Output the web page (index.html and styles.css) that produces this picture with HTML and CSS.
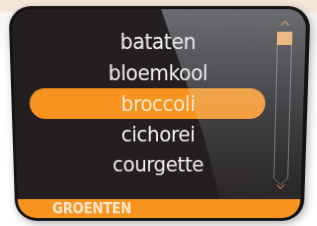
FILE: index.html
```
<!DOCTYPE html>
<html>
<head>
<meta charset="utf-8">
<link rel="stylesheet" href="styles.css">
</head>
<body>
  <div class="screen">
    <div class="screen__body">
      <ul class="screen__list">
        <li class="screen__item">bataten</li>
        <li class="screen__item">bloemkool</li>
        <li class="screen__item screen__item--active">broccoli</li>
        <li class="screen__item">cichorei</li>
        <li class="screen__item">courgette</li>
      </ul>
      <div class="screen__scroll">
        <svg width="15" height="172" viewBox="0 0 15 172">
          <polyline points="4,6 7.5,1.5 11,6" fill="none" stroke="#f5a04a" stroke-width="1"/>
          <path d="M0.5 12 V160 L7.5 167 L14.5 160 V12" fill="none" stroke="#6b6b6e" stroke-width="1"/>
          <rect x="0" y="12" width="15" height="13" fill="#f7a54e"/>
          <polyline points="4,167 7.5,171 11,167" fill="none" stroke="#f5a04a" stroke-width="1"/>
        </svg>
      </div>
    </div>
    <div class="screen__footer">GROENTEN</div>
  </div>
</body>
</html>
```

FILE: styles.css
```
* { box-sizing: border-box; }

body {
  margin: 0;
  padding: 7px 0 0 12px;
  width: 317px;
  height: 226px;
  overflow: hidden;
  background: linear-gradient(to bottom, #f3e7da 0, #f3e7da 11px, #f7f5f3 14px, #fff 60px);
  font-family: "DejaVu Sans Condensed", "Liberation Sans", sans-serif;
  font-stretch: condensed;
}

.screen {
  position: relative;
  width: 295px;
  height: 218px;
  border: 3px solid #151314;
  border-right-width: 4px;
  border-radius: 22px;
  background: #231f20;
  overflow: hidden;
  display: flex;
  flex-direction: column;
  transform: perspective(800px) rotateX(-10deg);
  box-shadow: 2px 3px 8px rgba(0, 0, 0, 0.3);
}

/* glossy reflection */
.screen::after {
  content: "";
  position: absolute;
  top: 0;
  left: 0;
  right: 0;
  bottom: 0;
  background: linear-gradient(to bottom, rgba(215, 222, 235, 0.4), rgba(215, 222, 235, 0.17) 50%, rgba(215, 222, 235, 0.05) 85%);
  clip-path: polygon(146px 0, 295px 0, 295px 192px, 206px 192px, 190px 130px, 167px 60px);
  pointer-events: none;
}

.screen__body {
  flex: 1;
  display: flex;
}

.screen__list {
  list-style: none;
  margin: 16px 0 0 15px;
  padding: 0;
  width: 235px;
}

.screen__item {
  height: 31px;
  line-height: 31px;
  padding-left: 21px;
  text-align: center;
  font-size: 22px;
  letter-spacing: -0.4px;
  color: #f1efee;
}

.screen__item--active {
  background: #f7931e;
  border-radius: 16px;
  color: #fde7cc;
}

.screen__scroll {
  margin: 10px 0 0 10px;
  width: 15px;
}

.screen__scroll svg {
  display: block;
}

.screen__footer {
  height: 20px;
  background: #f7931e;
  padding-left: 35px;
  font-weight: bold;
  font-size: 15px;
  line-height: 20px;
  letter-spacing: -0.3px;
  color: #fde7cc;
}
```
